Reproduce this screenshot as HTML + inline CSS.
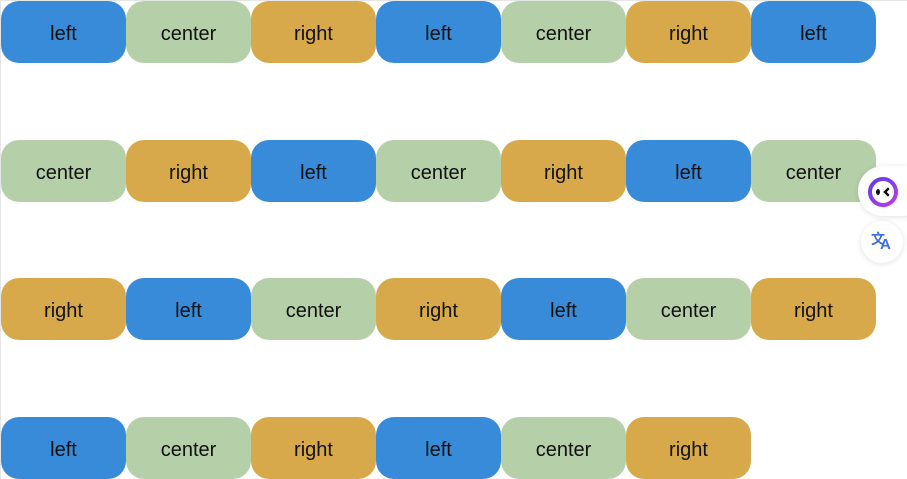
<!DOCTYPE html>
<html><head><style>
html,body{margin:0;padding:0;width:907px;height:478px;overflow:hidden;background:#fff;}
.frame{position:absolute;left:0;top:0;width:906px;height:478px;border-left:1px solid #e6e6e6;border-top:1px solid #e6e6e6;}
.b{position:absolute;width:125px;height:62px;border-radius:18px;font-family:"Liberation Sans",sans-serif;font-size:20px;color:#111;display:flex;align-items:center;justify-content:center;box-sizing:border-box;padding-top:4px;}
.l{background:#388bd8;} .c{background:#b5cfa9;} .r{background:#d8a94a;}
</style></head><body>
<div class="frame"></div>
<div id="w"></div>
<script>
var t=[["l","left"],["c","center"],["r","right"]],rows=[1,140,278,417],h="",i=0;
for(var r=0;r<4;r++)for(var k=0;k<7&&i<27;k++,i++){var o=t[i%3];h+='<div class="b '+o[0]+'" style="left:'+(1+k*125)+'px;top:'+rows[r]+'px">'+o[1]+'</div>';}
document.getElementById('w').innerHTML=h;
</script>
<div style="position:absolute;left:858px;top:166px;width:70px;height:50px;border-radius:25px;background:#fff;box-shadow:0 1px 6px rgba(0,0,0,.12);"></div>
<svg style="position:absolute;left:866px;top:175px" width="34" height="34" viewBox="0 0 34 34">
<defs><linearGradient id="g" x1="0" y1="0" x2="1" y2="1"><stop offset="0" stop-color="#5a3cf0"/><stop offset="1" stop-color="#c03ce0"/></linearGradient></defs>
<circle cx="17" cy="17" r="13" fill="none" stroke="url(#g)" stroke-width="4"/>
<ellipse cx="12" cy="17" rx="2" ry="3" fill="#111"/><path d="M22 14 L19 17 L22 20" stroke="#111" stroke-width="2.5" fill="none" stroke-linecap="round"/>
</svg>
<div style="position:absolute;left:861px;top:221px;width:42px;height:42px;border-radius:21px;background:#fff;box-shadow:0 1px 6px rgba(0,0,0,.12);font-family:'Noto Sans CJK SC',sans-serif;color:#3a6fe0;font-size:14px;font-weight:bold;"><span style="position:absolute;left:10px;top:8px">文</span><span style="position:absolute;left:19px;top:15px;font-family:'Liberation Sans',sans-serif;font-size:15px">A</span></div>
</body></html>
